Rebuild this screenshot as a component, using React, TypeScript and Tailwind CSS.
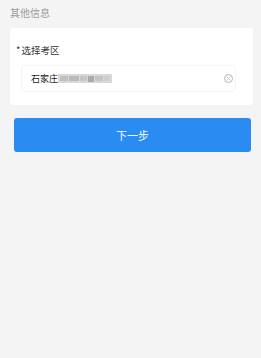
import { X } from "lucide-react";

const App = () => {
    return (
        <div className="min-h-[358px] w-full bg-[#f4f4f4] font-['Noto_Sans_CJK_SC',sans-serif]">
            {/* Section title */}
            <div className="px-[10px] pt-[6px] pb-[8px] text-[10px] leading-[14px] text-[#9a9a9a]">
                其他信息
            </div>

            {/* Card */}
            <div className="ml-[10px] mr-[8px] rounded-[3px] bg-white pl-[11px] pr-[17px] pt-[15px] pb-[13px]">
                <div className="-ml-[5px] flex items-start text-[9.5px] leading-[14px] text-[#333]">
                    <span className="mr-[1px] text-[#333]">*</span>
                    选择考区
                </div>
                <div className="mt-[8px] flex h-[27px] items-center rounded-[4px] border border-[#f4f4f4] pl-[9px] pr-[2px]">
                    <span className="text-[9px] text-[#222]">石家庄</span>
                    <span className="flex h-[9px] items-center gap-[1px] bg-[#d9d9d9] px-[2px] blur-[0.6px]">
                        <span className="h-[5px] w-[8px] bg-[#c0c0c0]" />
                        <span className="h-[5px] w-[10px] bg-[#bababa]" />
                        <span className="h-[5px] w-[7px] bg-[#c6c6c6]" />
                        <span className="h-[6px] w-[6px] bg-[#ababab]" />
                        <span className="h-[5px] w-[8px] bg-[#c4c4c4]" />
                        <span className="h-[5px] w-[6px] bg-[#cfcfcf]" />
                    </span>
                    <span className="ml-auto flex h-[9px] w-[9px] items-center justify-center rounded-full border border-[#b5b5b5] text-[#b5b5b5]">
                        <X size={5} strokeWidth={3} />
                    </span>
                </div>
            </div>

            {/* Next button */}
            <div className="ml-[14px] mr-[10px] pt-[13px]">
                <button className="flex h-[34px] w-full items-center justify-center rounded-[3px] bg-[#2a8cf0] text-[11px] text-white">
                    下一步
                </button>
            </div>
        </div>
    );
};

export default App;
